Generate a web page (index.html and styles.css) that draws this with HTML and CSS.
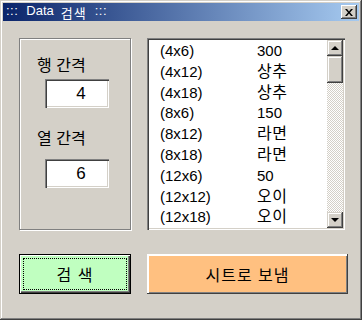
FILE: index.html
```html
<!DOCTYPE html>
<html lang="ko">
<head>
    <meta charset="UTF-8">
    <title>Data 검색</title>
    <link rel="stylesheet" href="styles.css">
</head>
<body>
    <div class="window">
        <div class="titlebar">
            <span class="title"><span class="dots">:::</span>Data<span class="ko">검색</span><span class="dots">:::</span></span>
            <button class="close" type="button">
                <svg width="8" height="7" viewBox="0 0 8 7"><path d="M0 0h2l2 2.5L6 0h2L5 3.5 8 7H6L4 4.5 2 7H0l3-3.5z" fill="#000"/></svg>
            </button>
        </div>
        <div class="content">
            <div class="top">
                <div class="frame">
                    <label class="field-label first" for="row">행 간격</label>
                    <input class="field" id="row" type="text" value="4">
                    <label class="field-label second" for="col">열 간격</label>
                    <input class="field" id="col" type="text" value="6">
                </div>
                <div class="listbox">
                    <ul class="items">
                        <li><span class="size">(4x6)</span><span class="val">300</span></li>
                        <li><span class="size">(4x12)</span><span class="val ko">상추</span></li>
                        <li><span class="size">(4x18)</span><span class="val ko">상추</span></li>
                        <li><span class="size">(8x6)</span><span class="val">150</span></li>
                        <li><span class="size">(8x12)</span><span class="val ko">라면</span></li>
                        <li><span class="size">(8x18)</span><span class="val ko">라면</span></li>
                        <li><span class="size">(12x6)</span><span class="val">50</span></li>
                        <li><span class="size">(12x12)</span><span class="val ko">오이</span></li>
                        <li><span class="size">(12x18)</span><span class="val ko">오이</span></li>
                    </ul>
                    <div class="scrollbar">
                        <div class="sbtn"><span class="arrow up"></span></div>
                        <div class="thumb"></div>
                        <div class="track"></div>
                        <div class="sbtn"><span class="arrow down"></span></div>
                    </div>
                </div>
            </div>
            <div class="buttons">
                <button class="btn search" type="button"><span class="focus">검 색</span></button>
                <button class="btn send" type="button">시트로 보냄</button>
            </div>
        </div>
    </div>
</body>
</html>
```

FILE: styles.css
```css
body {
    margin: 0;
    font-family: "Liberation Sans", "Noto Sans CJK KR", sans-serif;
}
.window {
    box-sizing: border-box;
    width: 362px;
    height: 320px;
    padding: 3px;
    background-color: #d4d0c8;
    box-shadow: inset -1px -1px #404040, inset 1px 1px #d4d0c8, inset -2px -2px #808080, inset 2px 2px #fff;
}
.titlebar {
    height: 18px;
    display: flex;
    align-items: center;
    justify-content: space-between;
    padding: 0 2px 0 3px;
    background: linear-gradient(to right, #0a246a, #a6caf0);
}
.title {
    display: flex;
    gap: 8px;
    color: #fff;
    font-size: 13px;
}
.title .ko {
    letter-spacing: 1px;
    margin-left: -1px;
}
.dots {
    letter-spacing: 0.5px;
}
.close {
    box-sizing: border-box;
    width: 16px;
    height: 14px;
    padding: 0;
    border: none;
    display: flex;
    align-items: center;
    justify-content: center;
    background-color: #d4d0c8;
    box-shadow: inset -1px -1px #404040, inset 1px 1px #fff, inset -2px -2px #808080;
}
.content {
    padding: 17px 0 0 16px;
}
.top {
    display: flex;
    gap: 16px;
    height: 192px;
}
.frame {
    box-sizing: border-box;
    width: 112px;
    border: 1px solid #808080;
    box-shadow: inset 1px 1px #fff, 1px 1px #fff;
    display: flex;
    flex-direction: column;
    align-items: flex-start;
}
.field-label {
    font-size: 16px;
    line-height: 20px;
    margin-left: 17px;
    color: #000;
}
.field-label.first {
    margin-top: 17px;
}
.field-label.second {
    margin-top: 21px;
}
.field {
    box-sizing: border-box;
    width: 64px;
    height: 29px;
    margin: 3px 0 0 25px;
    padding: 0 0 0 8px;
    border: none;
    text-align: center;
    font-family: "Liberation Sans", sans-serif;
    font-size: 17px;
    background-color: #fff;
    box-shadow: inset 1px 1px #808080, inset 2px 2px #404040, inset -1px -1px #fff, inset -2px -2px #d4d0c8;
}
.field-label.second + .field {
    margin-top: 10px;
}
.listbox {
    box-sizing: border-box;
    width: 198px;
    padding: 2px;
    display: flex;
    background-color: #fff;
    box-shadow: inset 1px 1px #808080, inset 2px 2px #404040, inset -1px -1px #fff, inset -2px -2px #d4d0c8;
}
.items {
    flex: 1;
    list-style: none;
    margin: 0;
    padding: 1px 0 0 11px;
    font-size: 15px;
    line-height: 20.8px;
}
.items li {
    display: flex;
    height: 20.8px;
}
.size {
    width: 97px;
}
.val.ko {
    font-size: 16px;
    letter-spacing: 0.5px;
}
.scrollbar {
    width: 16px;
    display: flex;
    flex-direction: column;
}
.sbtn, .thumb {
    box-sizing: border-box;
    background-color: #d4d0c8;
    box-shadow: inset -1px -1px #404040, inset 1px 1px #d4d0c8, inset -2px -2px #808080, inset 2px 2px #fff;
}
.sbtn {
    height: 16px;
    display: flex;
    align-items: center;
    justify-content: center;
}
.thumb {
    height: 27px;
}
.track {
    flex: 1;
    background: repeating-conic-gradient(#fff 0 25%, #d4d0c8 0 50%) 0 0 / 2px 2px;
}
.arrow {
    width: 0;
    height: 0;
    border-left: 4px solid transparent;
    border-right: 4px solid transparent;
}
.arrow.up {
    border-bottom: 4px solid #000;
}
.arrow.down {
    border-top: 4px solid #000;
}
.buttons {
    display: flex;
    gap: 16px;
    margin-top: 24px;
}
.btn {
    box-sizing: border-box;
    height: 40px;
    padding: 0;
    font-family: "Noto Sans CJK KR", sans-serif;
    font-size: 16px;
    letter-spacing: 1px;
    color: #000;
    cursor: pointer;
}
.search {
    width: 112px;
    display: flex;
    border: 1px solid #000;
    background-color: #c0ffc0;
    box-shadow: inset 1px 1px #fff, inset -1px -1px #404040, inset -2px -2px #808080;
}
.focus {
    flex: 1;
    margin: 3px;
    border: 1px dotted #000;
    display: flex;
    align-items: center;
    justify-content: center;
}
.send {
    width: 201px;
    border: none;
    background-color: #ffc080;
    box-shadow: inset -1px -1px #404040, inset 2px 2px #fff, inset -2px -2px #808080;
}
```
